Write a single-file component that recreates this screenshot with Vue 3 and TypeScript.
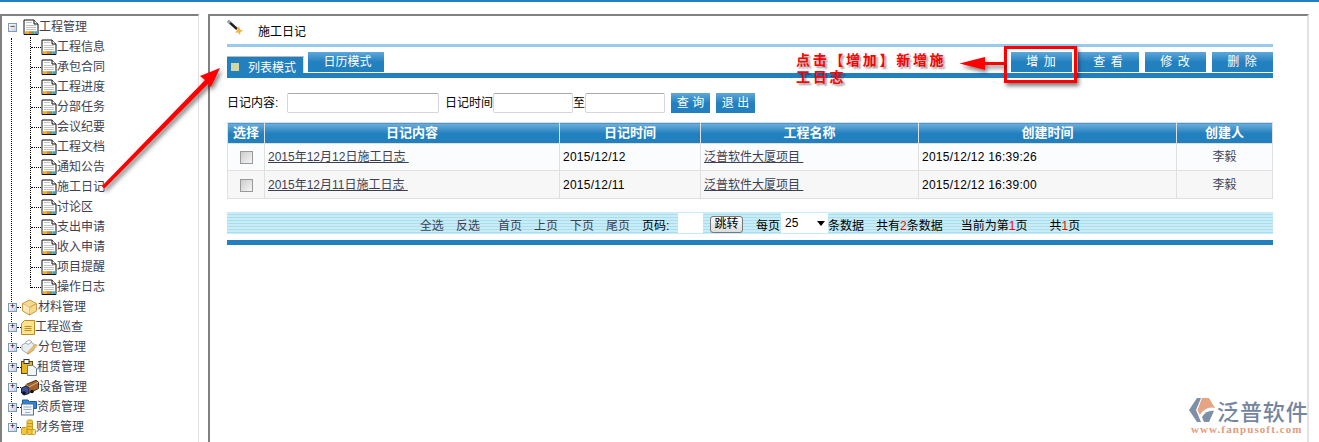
<script setup lang="ts">
const children: string[] = ['工程信息','承包合同','工程进度','分部任务','会议纪要','工程文档','通知公告','施工日记','讨论区','支出申请','收入申请','项目提醒','操作日志']
const groups = [
  { name: '材料管理', icon: 'box', w: 17 },
  { name: '工程巡查', icon: 'note', w: 14 },
  { name: '分包管理', icon: 'pack', w: 17 },
  { name: '租赁管理', icon: 'clip', w: 16 },
  { name: '设备管理', icon: 'truck', w: 18 },
  { name: '资质管理', icon: 'folder', w: 16 },
  { name: '财务管理', icon: 'coins', w: 15 },
]
const rows = [
  { c: '2015年12月12日施工日志 ', d: '2015/12/12', p: '泛普软件大厦项目 ', t: '2015/12/12 16:39:26', u: '李毅' },
  { c: '2015年12月11日施工日志 ', d: '2015/12/11', p: '泛普软件大厦项目 ', t: '2015/12/12 16:39:00', u: '李毅' },
]
const actions: string[] = ['增加','查看','修改','删除']
</script>

<template>
  <div class="page">
    <svg class="defs" width="0" height="0">
      <defs>
        <symbol id="doc" viewBox="0 0 16 16">
          <path d="M1 1H11L15 5V15.500H1Z" fill="#fff" stroke="#111"/>
          <path d="M11 1V5H15" fill="#f2f2f2" stroke="#111"/>
          <path d="M3 3.500h6M3 6.500h10M3 8.500h10M3 10.500h10" stroke="#c4c4c4"/>
          <rect x="2" y="12.200" width="3.500" height="2.800" fill="#f4b400"/><rect x="5.500" y="12.200" width="3.500" height="2.800" fill="#e87b2c"/><rect x="9" y="12.200" width="2.500" height="2.800" fill="#69a84f"/><rect x="11.500" y="12.200" width="3" height="2.800" fill="#4aa0c8"/>
        </symbol>
        <symbol id="box" viewBox="0 0 17 17">
          <path d="M8.500 1L15.500 4.500V12L8.500 16L1.500 12V4.500Z" fill="#f6d98f" stroke="#c99a45"/>
          <path d="M1.500 4.500L8.500 8.500L15.500 4.500M8.500 8.500V16" fill="none" stroke="#c99a45"/>
          <path d="M2.500 5L8.500 8.500V15L2.500 11.500Z" fill="#fbe9b9"/>
        </symbol>
        <symbol id="note" viewBox="0 0 14 15">
          <path d="M3.500 .5H13.500V14.500H.5V3.500Z" fill="#fbe28f" stroke="#c08a1c"/>
          <path d="M3.500 6.500h7M3.500 8.500h7M3.500 10.500h7" stroke="#c08a1c"/>
        </symbol>
        <symbol id="pack" viewBox="0 0 17 17">
          <path d="M1 6L8 2L13 5V11L7 15L1 11Z" fill="#e9edf2" stroke="#a7adb5"/>
          <path d="M4 3.500L8 .8L11 3L7 5.500Z" fill="#f7f8fa" stroke="#a7adb5"/>
          <path d="M7 13L14.500 5L16 6.500L9 14L6.500 15Z" fill="#f2c66b" stroke="#c99a45" stroke-width=".8"/>
        </symbol>
        <symbol id="clip" viewBox="0 0 16 17">
          <rect x=".5" y="2.500" width="11" height="12" fill="#e7b521" stroke="#5a4a12"/>
          <rect x="3" y=".5" width="5" height="4" fill="#fff" stroke="#333"/>
          <path d="M6.500 6.500H12L15.500 9.500V16.500H6.500Z" fill="#f3f5f9" stroke="#6f7a92"/>
        </symbol>
        <symbol id="truck" viewBox="0 0 18 16">
          <path d="M5 5L15 .8L17.500 2.500V9L8 13.500L5 11.500Z" fill="#a2622a" stroke="#5a3316"/>
          <path d="M5 5L8 7.500L17.500 2.500M8 7.500V13.500" fill="none" stroke="#e0b080"/>
          <path d="M.5 8.500L5 6.500L8 8V14L3 15.500L.5 13.500Z" fill="#3f4f8f" stroke="#1b1f3a"/>
          <circle cx="3" cy="13.500" r="1.800" fill="#111"/><circle cx="11" cy="12" r="1.800" fill="#111"/>
        </symbol>
        <symbol id="folder" viewBox="0 0 16 16">
          <path d="M1.500 .5H7L8.500 2H15.500V9H1.500Z" fill="#2e84d8" stroke="#1a5a9c"/>
          <rect x=".5" y="4.500" width="12" height="11" fill="#f1f4f8" stroke="#59708e"/>
          <path d="M2.500 7.500h8M2.500 10h8M4 13h5" stroke="#9fb0c6"/>
        </symbol>
        <symbol id="coins" viewBox="0 0 15 16">
          <rect x="6" y=".5" width="5.500" height="14.500" rx="1.500" fill="#f3c63f" stroke="#c99a1a"/>
          <path d="M6 4h5.500M6 7h5.500M6 10h5.500" stroke="#c99a1a"/>
          <rect x=".5" y="8" width="5.500" height="7" rx="1.500" fill="#f3c63f" stroke="#c99a1a"/>
          <rect x="11" y="10" width="3.500" height="5" rx="1" fill="#fbe28f" stroke="#c99a1a"/>
        </symbol>
      </defs>
    </svg>

    <aside class="side">
      <div class="tree">
        <div class="row root">
          <span class="toggle">−</span>
          <svg class="ico16 rooticon"><use href="#doc"/></svg>
          <span>工程管理</span>
        </div>
        <div class="kids">
          <div v-for="c in children" :key="c" class="row kid">
            <svg class="ico16"><use href="#doc"/></svg>
            <span>{{ c }}</span>
          </div>
        </div>
        <div v-for="g in groups" :key="g.name" class="row group">
          <span class="toggle plus">+</span>
          <svg class="gicon" :style="{ width: g.w + 'px' }"><use :href="'#' + g.icon"/></svg>
          <span>{{ g.name }}</span>
        </div>
      </div>
    </aside>

    <main class="main">
      <div class="title">
        <svg class="wand" width="17" height="16" viewBox="0 0 17 16">
          <path d="M1 1L10 9" stroke="#222" stroke-width="2.500"/>
          <path d="M1 1L3 3" stroke="#9ab" stroke-width="2.500"/>
          <path d="M12 6L13 9.500L16 10.500L13.500 12L13 15L11 12.500L8 12.500L10 10.500Z" fill="#f3b23a"/>
        </svg>
        <span>施工日记</span>
      </div>
      <div class="lightline"></div>
      <div class="tabbar">
        <div class="tabs">
          <div class="tab active"><i class="sq"></i>列表模式</div>
          <div class="tab">日历模式</div>
        </div>
        <div class="hint">点击【增加】新增施工日志</div>
        <div class="actions">
          <button v-for="a in actions" :key="a" class="btn">{{ a[0] }} {{ a[1] }}</button>
        </div>
      </div>
      <div class="bar"></div>

      <div class="filter">
        <span class="lbl1">日记内容:</span><input class="inp w1" />
        <span class="lbl2">日记时间</span><input class="inp w2" />
        <span>至</span><input class="inp w3" />
        <button class="btn small">查 询</button>
        <button class="btn small">退 出</button>
      </div>

      <table class="grid">
        <colgroup>
          <col style="width:37px" /><col style="width:295px" /><col style="width:141px" /><col style="width:218px" /><col style="width:258px" /><col />
        </colgroup>
        <thead>
          <tr><th>选择</th><th>日记内容</th><th>日记时间</th><th>工程名称</th><th>创建时间</th><th>创建人</th></tr>
        </thead>
        <tbody>
          <tr v-for="r in rows" :key="r.c">
            <td class="center"><span class="check"></span></td>
            <td><a class="link">{{ r.c }}</a></td>
            <td class="black">{{ r.d }}</td>
            <td><a class="link">{{ r.p }}</a></td>
            <td class="black">{{ r.t }}</td>
            <td class="center">{{ r.u }}</td>
          </tr>
        </tbody>
      </table>

      <div class="pager">
        <span class="dim">全选</span>
        <span class="dim g12">反选</span>
        <span class="dim g18">首页</span>
        <span class="dim g12">上页</span>
        <span class="dim g12">下页</span>
        <span class="dim g12">尾页</span>
        <span class="g12 code">页码:</span>
        <input class="pageinp" />
        <button class="jump">跳转</button>
        <span class="g13">每页</span>
        <span class="sel">25<i class="tri"></i></span>
        <span>条数据</span>
        <span class="g12">共有<b>2</b>条数据</span>
        <span class="g18">当前为第<b>1</b>页</span>
        <span class="g22">共<b>1</b>页</span>
      </div>
      <div class="bar bottom"></div>
    </main>

    <div class="redbox"></div>
    <svg class="arrows" width="1319" height="442" viewBox="0 0 1319 442">
      <defs>
        <filter id="sh" x="-20%" y="-20%" width="140%" height="140%">
          <feDropShadow dx="2" dy="3" stdDeviation="2" flood-color="#000" flood-opacity=".5"/>
        </filter>
      </defs>
      <g fill="#f00" filter="url(#sh)">
        <path d="M102 186L104 189L208 84L211 87L220 68L200 76L205 80Z"/>
        <path d="M1005 62V65H985V70L959.500 63.500L985 57V62Z"/>
      </g>
    </svg>

    <div class="logo">
      <svg class="mark" width="26" height="24" viewBox="0 0 26 24">
        <path d="M8 0H12L7 12L12 24H8L0 12Z" fill="#7e8fa8"/>
        <path d="M13 0H20L26 10C20 8 14 12 11 17L8.500 12Z" fill="#e5a585"/>
        <path d="M13 19C16 14 21 12 25 13L20 24H15Z" fill="#7e8fa8"/>
      </svg>
      <div class="logoname">泛普软件</div>
      <div class="logourl">www.fanpusoft.com</div>
    </div>
  </div>
</template>

<style>
html, body { margin: 0; padding: 0; background: #fff; }
</style>

<style scoped>
.page {
  position: relative;
  width: 1319px;
  height: 442px;
  overflow: hidden;
  box-sizing: border-box;
  border-top: 2px solid #2380bf;
  padding-top: 12px;
  display: flex;
  background: #fff;
  font: 12px/20px "Liberation Sans", "Noto Sans CJK SC", sans-serif;
  color: #3d3f52;
}
.defs { position: absolute; }
.side {
  width: 199px;
  box-sizing: border-box;
  border-top: 2px solid #808080;
  border-left: 2px solid #808080;
  border-right: 1px solid #e2e2e2;
  flex: none;
}
.tree { position: relative; padding-top: 1px; }
.tree::before {
  content: "";
  position: absolute;
  left: 9px;
  top: 22px;
  height: 390px;
  border-left: 1px dotted #000;
}
.row {
  height: 20px;
  display: flex;
  align-items: center;
  position: relative;
  white-space: nowrap;
  font-size: 12px;
}
.root { padding-left: 6px; }
.toggle {
  position: relative;
  z-index: 1;
  width: 7px;
  height: 7px;
  border: 1px solid #7f9db9;
  background: linear-gradient(135deg, #fff, #ccd);
  color: #000;
  font: 9px/7px "Liberation Mono", monospace;
  text-align: center;
  flex: none;
}
.rooticon { margin-left: 6px; }
.ico16 { width: 16px; height: 16px; flex: none; }
.kids { position: relative; }
.kid { padding-left: 39px; }
.kid::before {
  content: "";
  position: absolute;
  left: 28px;
  top: 0;
  bottom: 0;
  border-left: 1px dotted #000;
}
.kid:last-child::before { bottom: 9px; }
.kid::after {
  content: "";
  position: absolute;
  left: 29px;
  width: 10px;
  top: 10px;
  border-top: 1px dotted #000;
}
.group { padding-left: 6px; }
.group::after {
  content: "";
  position: absolute;
  left: 15px;
  width: 4px;
  top: 10px;
  border-top: 1px dotted #000;
}
.gicon { height: 17px; margin-left: 4px; flex: none; }

.main {
  margin-left: 9px;
  width: 1101px;
  flex: none;
  box-sizing: border-box;
  border-top: 2px solid #808080;
  border-left: 2px solid #808080;
  border-right: 2px solid #e2e2e2;
  padding-left: 17px;
  padding-right: 34px;
  color: #000;
}
.title {
  height: 28px;
  display: flex;
  align-items: flex-start;
  position: relative;
  padding-left: 31px;
  line-height: 33px;
}
.wand { position: absolute; left: 0; top: 4px; }
.lightline { height: 3px; background: #9ac9ee; }
.tabbar {
  height: 26px;
  display: flex;
  position: relative;
}
.tabs {
  display: flex;
  align-items: flex-end;
  gap: 4px;
  height: 26px;
}
.tab {
  width: 76px;
  height: 20px;
  margin-bottom: 1px;
  box-sizing: border-box;
  padding-left: 3px;
  text-align: center;
  color: #fff;
  background: linear-gradient(#5fa8da, #2380bf 50%);
  line-height: 21px;
}
.tab.active {
  height: 17px;
  margin-bottom: 0;
  width: 77px;
  background: #2380bf;
  border-top: 1px solid #bbb;
  border-right: 1px solid #ddd;
  padding-left: 21px;
  text-align: left;
  position: relative;
  line-height: 22px;
}
.sq {
  position: absolute;
  left: 4px;
  top: 6px;
  width: 8px;
  height: 8px;
  background: #d4d6a2;
}
.hint {
  position: absolute;
  left: 569px;
  top: 5px;
  width: 152px;
  color: #f00;
  font-size: 14px;
  font-weight: 700;
  line-height: 17px;
  letter-spacing: 2.700px;
  text-shadow: 2px 2px 2px rgba(0,0,0,.4);
  z-index: 2;
}
.actions {
  margin-left: auto;
  display: flex;
  gap: 6px;
  padding-top: 5px;
}
.btn {
  width: 61px;
  height: 20px;
  border: 0;
  padding: 0;
  color: #fff;
  font: 12px/20px "Liberation Sans", "Noto Sans CJK SC", sans-serif;
  letter-spacing: 1px;
  background: linear-gradient(#5fa8da, #2380bf 50%);
}
.btn.small { width: 39px; margin-left: 6px; letter-spacing: 0; }
.bar { height: 5px; background: #2380bf; }
.filter {
  display: flex;
  align-items: center;
  height: 20px;
  margin-top: 15px;
}
.lbl1 { width: 60px; flex: none; }
.inp {
  box-sizing: border-box;
  height: 20px;
  border: 1px solid #d5d5e2;
  border-top-color: #aaa;
  border-radius: 2px;
  background: #fff;
  padding: 0;
  outline: 0;
}
.w1 { width: 152px; }
.lbl2 { margin-left: 6px; }
.w2 { width: 80px; }
.w3 { width: 80px; }
.grid {
  width: 1046px;
  margin-top: 9px;
  border-collapse: collapse;
  table-layout: fixed;
  border: 1px solid #e0e0e0;
}
.grid th {
  height: 20px;
  padding: 0;
  border: 1px solid #e0e0e0;
  border-bottom: 0;
  color: #fff;
  font-size: 13px;
  font-weight: 700;
  background: linear-gradient(#6db0dd, #2380bf 50%);
}
.grid tbody td {
  height: 26px;
  padding: 0 3px;
  border: 1px solid #e0e0e0;
  color: #3d3f52;
}
.grid tbody tr:nth-child(1) td { background: #fbfcfe; }
.grid tbody tr:nth-child(2) td { background: #f7f7f7; height: 27px; }
.grid td.black { color: #000; letter-spacing: .25px; }
.grid td.center { text-align: center; }
.link { text-decoration: underline; white-space: pre; }
.check {
  display: inline-block;
  vertical-align: middle;
  width: 11px;
  height: 11px;
  border: 1px solid #999;
  background: linear-gradient(135deg, #ccc, #f6f6f6);
}
.pager {
  margin-top: 13px;
  height: 22px;
  display: flex;
  align-items: center;
  justify-content: center;
  background: repeating-linear-gradient(#c9ecf6 0 2px, #a9deef 2px 3px);
  color: #000;
  white-space: nowrap;
}
.pager > span:not(.sel) { padding-top: 6px; }
.dim { color: #3d3f52; }
.g12 { margin-left: 12px; }
.g13 { margin-left: 13px; }
.g18 { margin-left: 18px; }
.g22 { margin-left: 22px; }
.code { width: 29px; }
.pager b { color: #f00; font-weight: 400; }
.pageinp {
  width: 25px;
  height: 20px;
  box-sizing: border-box;
  border: 0;
  padding: 0;
  margin-left: 7px;
  background: #fff;
  outline: 0;
}
.jump {
  box-sizing: border-box;
  width: 33px;
  height: 17px;
  margin-left: 7px;
  margin-top: 2px;
  padding: 0;
  font: 12px/15px "Liberation Sans", "Noto Sans CJK SC", sans-serif;
  color: #000;
  background: linear-gradient(#fafafa, #ddd);
  border: 1px solid #777;
  border-radius: 3px;
}
.sel {
  position: relative;
  width: 47px;
  height: 20px;
  margin-left: 1px;
  padding-left: 4px;
  box-sizing: border-box;
  background: #fff;
  line-height: 20px;
}
.tri {
  position: absolute;
  right: 3px;
  top: 8px;
  border-style: solid;
  border-width: 5px 4px 0;
  border-color: #000 transparent transparent;
}
.bottom { margin-top: 6px; }
.redbox {
  position: absolute;
  left: 1004px;
  top: 44px;
  width: 73px;
  height: 37px;
  box-sizing: border-box;
  border: 3px solid #f00;
  box-shadow: 2px 3px 4px rgba(0,0,0,.5);
  pointer-events: none;
}
.arrows { position: absolute; left: 0; top: -2px; pointer-events: none; }
.logo {
  position: absolute;
  left: 1189px;
  top: 396px;
  width: 120px;
  height: 40px;
}
.mark { position: absolute; left: 0; top: 0; }
.logoname {
  position: absolute;
  left: 28px;
  top: 0;
  color: #74859f;
  font: 500 22px/24px "Noto Sans CJK SC", sans-serif;
  letter-spacing: .9px;
  white-space: nowrap;
}
.logourl {
  position: absolute;
  left: 2px;
  top: 26px;
  color: #e39b7b;
  font: 700 11px/11px "Liberation Serif", serif;
  letter-spacing: 1.100px;
  white-space: nowrap;
}
</style>
